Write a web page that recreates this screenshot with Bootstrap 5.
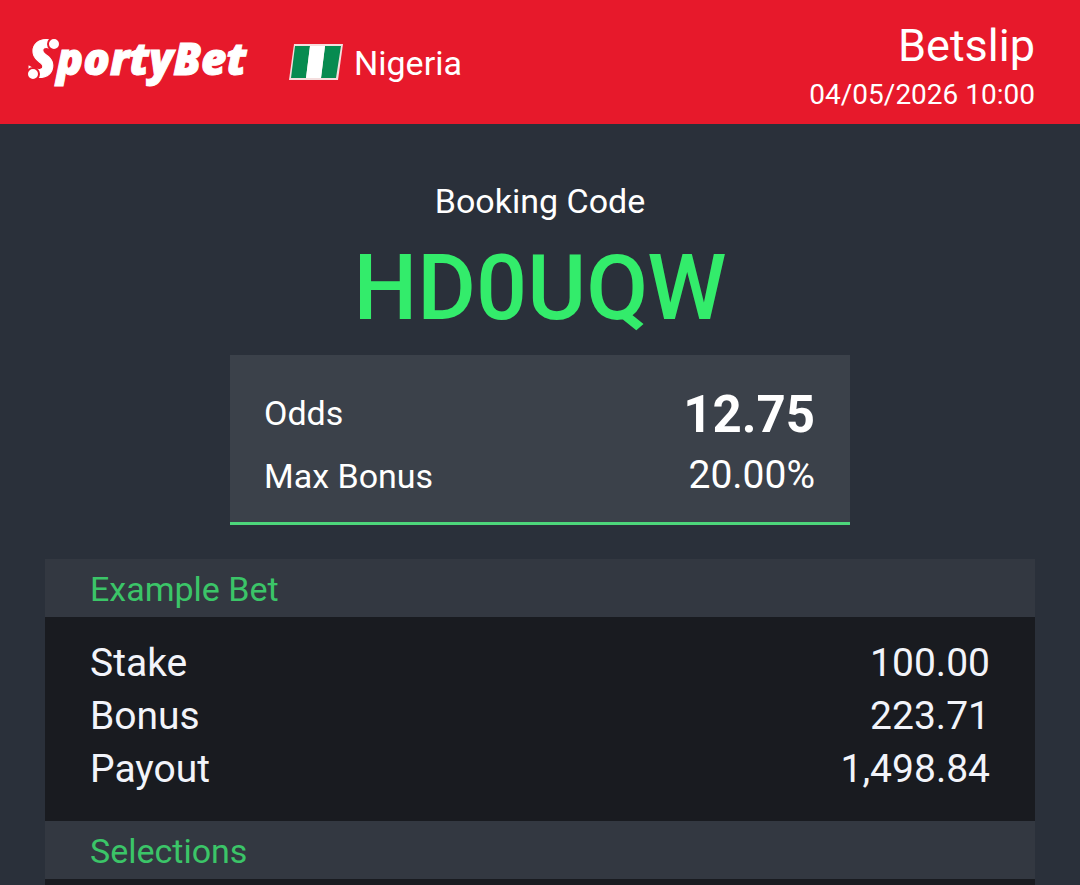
<!DOCTYPE html>
<html lang="en">
<head>
<meta charset="utf-8">
<meta name="viewport" content="width=device-width, initial-scale=1">
<title>SportyBet Betslip</title>
<link rel="stylesheet" href="https://cdn.jsdelivr.net/npm/bootstrap@5.3.0/dist/css/bootstrap.min.css">
<style>
  body { background: #2a303a; color: #fff; font-family: Roboto, "Liberation Sans", sans-serif; }
  .top-bar { background: #e7192b; padding: 0 45px 0 24px; }
  .brand-logo { width: 232px; height: 84px; }
  .country { gap: 11px; margin-left: 32px; font-size: 34px; line-height: 40px; }
  .country span { padding-top: 2px; }
  .slip-info { padding: 17px 0 9px; }
  .slip-title { font-size: 45px; line-height: 58px; }
  .slip-date { font-size: 28px; line-height: 40px; }
  .booking { padding-top: 57px; }
  .booking-label { font-size: 34px; line-height: 40px; }
  .booking-code { color: #33ec6b; font-size: 90px; line-height: 96px; font-weight: 500; margin: 20px 0 18px; }
  .summary { width: 620px; max-width: 100%; background: #3b414a; border-bottom: 3px solid #4dd67b; padding: 27px 35px 19px 34px; font-size: 34px; }
  .summary dt, .details dt { font-weight: 400; }
  .odds-row dt { line-height: 62px; }
  .odds-row dd { font-size: 51px; line-height: 66px; font-weight: 700; }
  .bonus-row { line-height: 54px; }
  .bonus-row dd { font-size: 39px; }
  .slip-body { padding: 34px 45px 0; }
  .section-title { background: #333841; color: #3bc568; font-size: 34px; line-height: 56px; font-weight: 400; padding: 2px 45px 0; }
  .details { background: #191b20; color: #f2f4fa; padding: 20px 45px 25px; font-size: 39px; line-height: 53px; }
</style>
</head>
<body>
<header class="top-bar d-flex justify-content-between align-items-center">
  <div class="d-flex align-items-center">
    <svg class="brand-logo" viewBox="0 0 232 84" role="img" aria-label="SportyBet" fill="#fff">
      <text x="4" y="57" font-family="'Open Sans', sans-serif" font-size="44" font-weight="800" font-style="italic" stroke="#fff" stroke-width="1"><tspan font-size="52">S</tspan><tspan dy="-2">portyBet</tspan></text>
      <g stroke="#e7192b" stroke-width="2">
        <circle cx="30" cy="24" r="6"/>
        <circle cx="9" cy="54" r="6"/>
      </g>
    </svg>
    <div class="country d-flex align-items-center">
      <svg width="55" height="38" viewBox="0 0 55 38" aria-hidden="true">
        <path d="M6 1H55L50 37H1Z" fill="#f5dede"/>
        <path d="M7 3H22L18 35H3Z M37 3H53L48 35H33Z" fill="#078b50"/>
        <path d="M22 3H37L33 35H18Z" fill="#fff"/>
      </svg>
      <span>Nigeria</span>
    </div>
  </div>
  <div class="slip-info text-end">
    <h1 class="slip-title fw-normal mb-0">Betslip</h1>
    <time class="slip-date d-block" datetime="2026-05-04T10:00">04/05/2026 10:00</time>
  </div>
</header>
<main>
  <section class="booking text-center">
    <div class="booking-label">Booking Code</div>
    <div class="booking-code">HD0UQW</div>
    <dl class="summary mx-auto mb-0">
      <div class="odds-row d-flex justify-content-between align-items-start">
        <dt>Odds</dt><dd class="mb-0">12.75</dd>
      </div>
      <div class="bonus-row d-flex justify-content-between align-items-baseline">
        <dt>Max Bonus</dt><dd class="mb-0">20.00%</dd>
      </div>
    </dl>
  </section>
  <div class="slip-body">
    <section>
      <h2 class="section-title mb-0">Example Bet</h2>
      <dl class="details mb-0">
        <div class="d-flex justify-content-between"><dt>Stake</dt><dd class="mb-0">100.00</dd></div>
        <div class="d-flex justify-content-between"><dt>Bonus</dt><dd class="mb-0">223.71</dd></div>
        <div class="d-flex justify-content-between"><dt>Payout</dt><dd class="mb-0">1,498.84</dd></div>
      </dl>
    </section>
    <section>
      <h2 class="section-title mb-0">Selections</h2>
      <div class="details pt-1 pb-1"></div>
    </section>
  </div>
</main>
<script src="https://cdn.jsdelivr.net/npm/bootstrap@5.3.0/dist/js/bootstrap.bundle.min.js"></script>
</body>
</html>
